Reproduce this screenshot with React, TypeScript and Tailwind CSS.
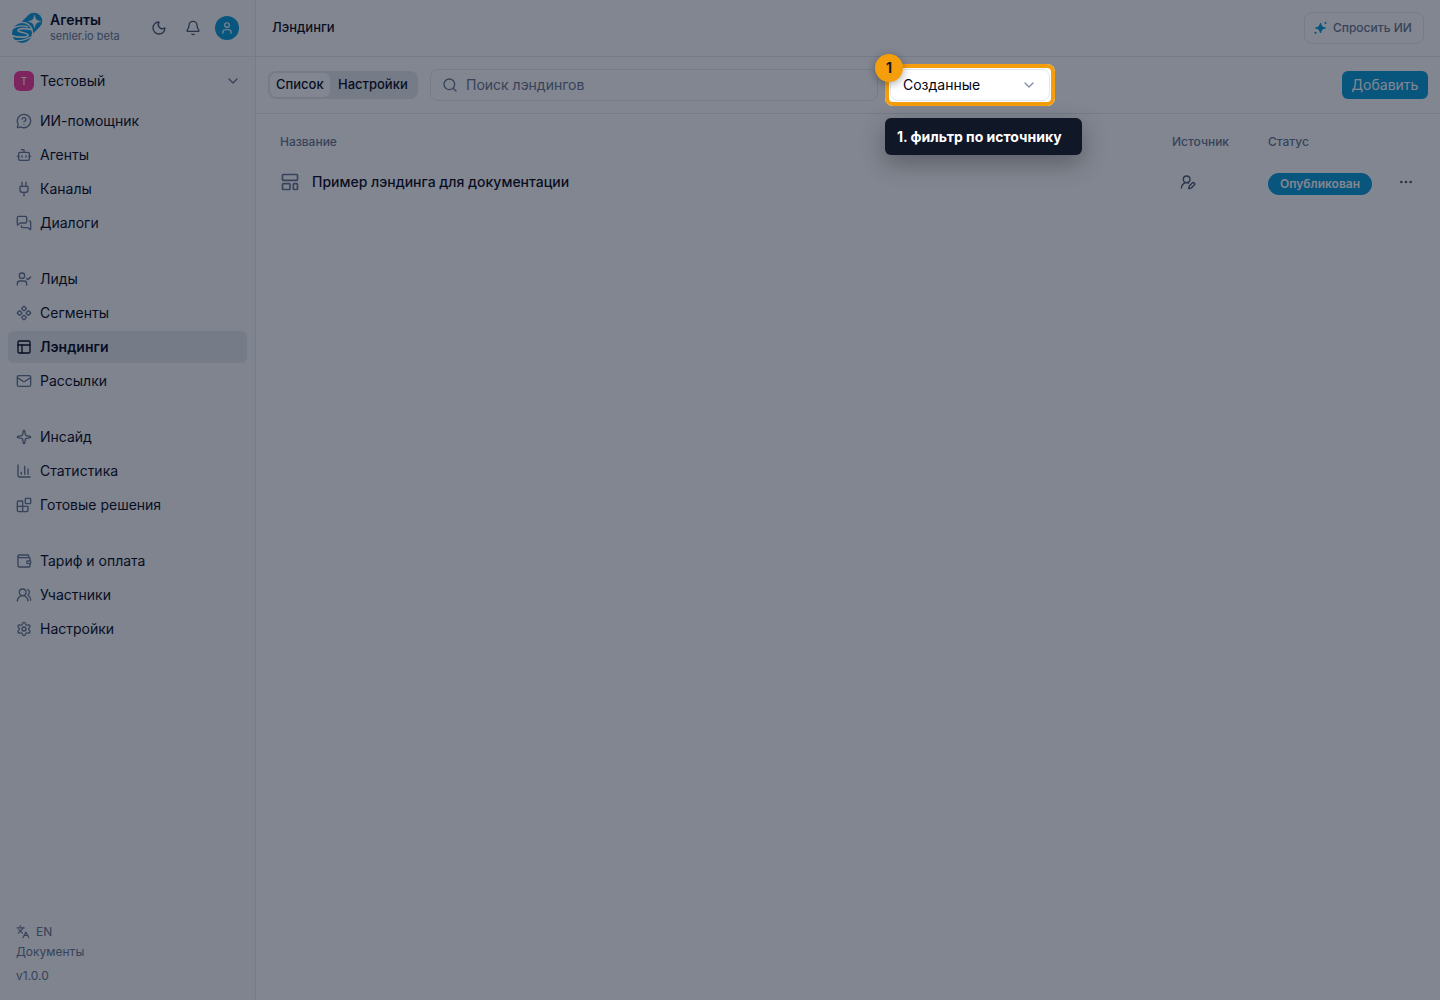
import type { ComponentType } from 'react';
import {
  Bell,
  Blocks,
  Bot,
  ChartColumn,
  ChevronDown,
  Component,
  Ellipsis,
  Languages,
  LayoutTemplate,
  Mail,
  MessageCircleQuestionMark,
  MessagesSquare,
  Moon,
  PanelsTopLeft,
  Plug,
  Search,
  Settings,
  Sparkle,
  User,
  UserCheck,
  UserRoundPen,
  UsersRound,
  Wallet,
} from 'lucide-react';

type NavItem = {
  label: string;
  icon: ComponentType<{ className?: string }>;
  active?: boolean;
};

const groups: NavItem[][] = [
  [
    { label: 'ИИ-помощник', icon: MessageCircleQuestionMark },
    { label: 'Агенты', icon: Bot },
    { label: 'Каналы', icon: Plug },
    { label: 'Диалоги', icon: MessagesSquare },
  ],
  [
    { label: 'Лиды', icon: UserCheck },
    { label: 'Сегменты', icon: Component },
    { label: 'Лэндинги', icon: PanelsTopLeft, active: true },
    { label: 'Рассылки', icon: Mail },
  ],
  [
    { label: 'Инсайд', icon: Sparkle },
    { label: 'Статистика', icon: ChartColumn },
    { label: 'Готовые решения', icon: Blocks },
  ],
  [
    { label: 'Тариф и оплата', icon: Wallet },
    { label: 'Участники', icon: UsersRound },
    { label: 'Настройки', icon: Settings },
  ],
];

function Logo() {
  return (
    <svg viewBox="0 0 32 32" className="size-8 shrink-0" aria-hidden="true">
      <mask id="capsule" maskUnits="userSpaceOnUse" x="0" y="0" width="32" height="32">
        <rect width="32" height="32" fill="white" />
        <circle cx="11" cy="21" r="11.2" fill="black" />
        <path
          d="M23.500 3.200C24.300 7.500 25.500 8.700 29.700 9.500 25.500 10.300 24.300 11.500 23.500 15.800 22.700 11.500 21.500 10.300 17.300 9.500 21.500 8.700 22.700 7.500 23.500 3.200Z"
          fill="black"
          stroke="black"
          strokeWidth="0.6"
        />
      </mask>
      <mask id="ball" maskUnits="userSpaceOnUse" x="0" y="0" width="32" height="32">
        <rect width="32" height="32" fill="white" />
        <g fill="none" stroke="black">
          <path d="M1 17C5 14 11 13.200 17 14.800" strokeWidth="1.200" />
          <path d="M21 17.800C15 15.800 7 16.300 7 18.600 7 21 17 20 17 23.200 17 26 7 25.600 0 23.500" strokeWidth="1.700" />
          <path d="M2 28C8 29.300 14 28.500 20 24.800" strokeWidth="1.200" />
        </g>
      </mask>
      <path d="M10 22 23 9" stroke="#0099da" strokeWidth="16.500" strokeLinecap="round" mask="url(#capsule)" />
      <circle cx="11" cy="21" r="10" fill="#0099da" mask="url(#ball)" />
    </svg>
  );
}

function AiSparkle() {
  return (
    <svg viewBox="0 0 16 16" className="size-4" fill="#0099da" aria-hidden="true">
      <path
        d="M7.500 3c.7 3.200 1.800 4.300 5 5-3.200.7-4.300 1.800-5 5-.7-3.200-1.800-4.300-5-5 3.200-.7 4.300-1.800 5-5Z"
        stroke="#0099da"
        strokeLinejoin="round"
      />
      <circle cx="12.500" cy="3" r="1.100" />
      <circle cx="2.500" cy="12.800" r="1.100" />
    </svg>
  );
}

function Sidebar() {
  return (
    <aside className="flex w-64 shrink-0 flex-col border-r border-slate-200 bg-slate-50">
      <div className="flex h-[57px] items-center border-b border-slate-200 pr-4 pl-[11px]">
        <Logo />
        <div className="ml-[7px] flex-1">
          <div className="text-sm leading-4 font-semibold">Агенты</div>
          <div className="text-[11px] leading-4 text-slate-500">senler.io beta</div>
        </div>
        <div className="flex items-center gap-[18px] text-slate-600">
          <button type="button" aria-label="Тема">
            <Moon className="size-4" />
          </button>
          <button type="button" aria-label="Уведомления">
            <Bell className="size-4" />
          </button>
          <button
            type="button"
            aria-label="Профиль"
            className="-ml-1 flex size-6 items-center justify-center rounded-full bg-[#0099da] text-white"
          >
            <User className="size-[14px]" />
          </button>
        </div>
      </div>

      <button type="button" className="mt-2 flex h-8 items-center gap-[6px] px-[14px] text-left text-sm">
        <span className="flex size-5 items-center justify-center rounded-md bg-[#f6339a] text-[10px] text-white">Т</span>
        <span className="flex-1">Тестовый</span>
        <ChevronDown className="size-4 text-slate-500" />
      </button>

      <nav className="mt-2 flex flex-col gap-6 px-2">
        {groups.map((items) => (
          <ul key={items[0].label} className="flex flex-col gap-[2px]">
            {items.map(({ label, icon: Icon, active }) => (
              <li key={label}>
                <a
                  href="#"
                  aria-current={active ? 'page' : undefined}
                  className={
                    active
                      ? 'flex h-8 items-center gap-2 rounded-md bg-[#e3e8ec] px-2 text-sm font-semibold'
                      : 'flex h-8 items-center gap-2 rounded-md px-2 text-sm'
                  }
                >
                  <Icon className={active ? 'size-4' : 'size-4 text-slate-500'} />
                  {label}
                </a>
              </li>
            ))}
          </ul>
        ))}
      </nav>

      <footer className="mt-auto flex flex-col items-start px-4 pb-4 text-xs text-slate-500">
        <button type="button" className="flex items-center gap-[6px]">
          <Languages className="size-[14px]" />
          EN
        </button>
        <a href="#" className="mt-1">
          Документы
        </a>
        <span className="mt-2">v1.0.0</span>
      </footer>
    </aside>
  );
}

// The ring's spread shadow dims everything outside the highlighted control.
function Spotlight() {
  return (
    <div className="pointer-events-none">
      <div className="absolute -inset-[5px] z-40 rounded-lg border-4 border-[#f59e0b] shadow-[0_0_0_9999px_rgba(15,23,42,0.52)]" />
      <div className="absolute -top-[15px] -left-[15px] z-50 flex size-7 items-center justify-center rounded-full bg-[#f59e0b] text-sm font-bold text-gray-900 shadow-[0_2px_8px_rgba(0,0,0,0.35)]">
        1
      </div>
      <div className="absolute top-[49px] -left-[5px] z-50 min-w-[197px] rounded-md bg-gray-900 px-3 py-2 text-sm leading-[21px] font-bold whitespace-nowrap text-white shadow-[0_8px_24px_rgba(0,0,0,0.3)]">
        1. фильтр по источнику
      </div>
    </div>
  );
}

function Toolbar() {
  return (
    <div className="flex h-[57px] items-center border-b border-slate-200 px-3">
      <div className="flex h-7 w-[150px] items-center rounded-lg bg-[#e3e8ec] p-[2px] text-[13px] font-medium">
        <button type="button" className="h-6 rounded-md bg-white px-[6px]">
          Список
        </button>
        <button type="button" className="h-6 flex-1">
          Настройки
        </button>
      </div>
      <label className="ml-3 flex h-8 w-[448px] items-center gap-2 rounded-lg border border-slate-200 px-[11px]">
        <Search className="size-4 text-slate-500" />
        <input
          type="search"
          aria-label="Поиск"
          placeholder="Поиск лэндингов"
          className="min-w-0 flex-1 text-sm outline-none placeholder:text-slate-500"
        />
      </label>
      <div className="relative ml-3 w-40">
        <select
          aria-label="Источник"
          className="h-8 w-full appearance-none rounded-lg border border-slate-200 bg-white px-3 text-sm"
        >
          <option>Созданные</option>
        </select>
        <ChevronDown className="pointer-events-none absolute top-2 right-[13px] size-4 text-slate-500/80" />
        <Spotlight />
      </div>
      <button type="button" className="ml-auto h-7 min-w-[86px] rounded-md bg-[#0099da] px-2 text-sm text-white">
        Добавить
      </button>
    </div>
  );
}

function LandingTable() {
  return (
    <table className="w-full table-fixed text-left">
      <colgroup>
        <col />
        <col className="w-24" />
        <col className="w-28" />
        <col className="w-[60px]" />
      </colgroup>
      <thead className="text-xs text-slate-500">
        <tr className="h-14">
          <th className="pl-6 font-medium">Название</th>
          <th className="font-medium">Источник</th>
          <th className="font-medium">Статус</th>
          <th aria-label="Действия" />
        </tr>
      </thead>
      <tbody>
        <tr className="h-6">
          <td className="pb-[2px] pl-6">
            <a href="#" className="flex items-center gap-3 text-sm font-medium">
              <LayoutTemplate className="size-5 text-slate-500" />
              Пример лэндинга для документации
            </a>
          </td>
          <td className="pb-[2px] pl-2 text-slate-600">
            <UserRoundPen className="size-4" />
          </td>
          <td className="pt-[3px]">
            <span className="flex h-[22px] w-[104px] items-center justify-center rounded-full bg-[#0099da] text-xs font-semibold text-white">
              Опубликован
            </span>
          </td>
          <td className="pb-[2px] pl-[18px]">
            <button type="button" aria-label="Ещё" className="block text-slate-600">
              <Ellipsis className="size-4" />
            </button>
          </td>
        </tr>
      </tbody>
    </table>
  );
}

export default function App() {
  return (
    <div className="flex min-h-screen overflow-hidden bg-white font-['Inter',sans-serif] text-slate-950">
      <Sidebar />
      <main className="min-w-0 flex-1">
        <header className="flex h-[57px] items-center justify-between border-b border-slate-200 px-4">
          <h1 className="text-[13px] font-medium">Лэндинги</h1>
          <button
            type="button"
            className="flex h-8 min-w-[120px] items-center gap-1 rounded-lg border border-slate-200 px-2 text-xs font-medium text-slate-500"
          >
            <AiSparkle />
            Спросить ИИ
          </button>
        </header>
        <Toolbar />
        <LandingTable />
      </main>
    </div>
  );
}
